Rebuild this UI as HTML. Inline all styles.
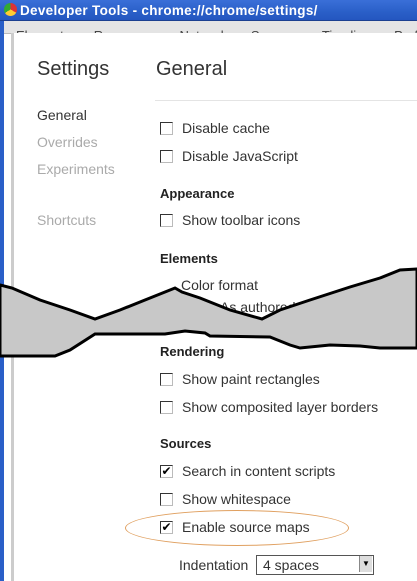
<!DOCTYPE html><html><head><style>
body{margin:0;width:417px;height:581px;overflow:hidden;position:relative;background:#fff;font-family:"Liberation Sans",sans-serif;}
.a{position:absolute;white-space:nowrap}
.t{font-size:14px;color:#333}
.h{font-size:13px;font-weight:bold;color:#222}
.cb{position:absolute;width:11px;height:11px;border:1px solid #333;border-right-color:#bbb;border-bottom-color:#bbb;background:#fff;font-size:12px;line-height:11px;text-align:center;color:#000}
.n{font-size:14px;color:#aaa}
</style></head><body>
<div class="a" style="left:0;top:0;width:417px;height:20px;background:linear-gradient(#3a6fd8,#2a5fc8 60%,#2456c0);border-bottom:1px solid #1b3f8f"></div>
<div class="a" style="left:4px;top:3px;width:13px;height:13px;border-radius:50%;background:conic-gradient(#d33 0 33%,#fc3 0 66%,#3a3 0)"></div>
<div class="a" style="left:20px;top:3px;color:#fff;font-weight:bold;font-size:13.5px;letter-spacing:0.3px">Developer Tools - chrome://chrome/settings/</div>
<div class="a" style="left:0;top:21px;width:4px;height:560px;background:#2a5fc8"></div>
<div class="a" style="left:4px;top:21px;width:413px;height:12px;background:#e4e4e4;border-bottom:1px solid #bbb"></div>
<div class="a" style="left:16px;top:28px;width:401px;font-size:13px;color:#444;height:5px;overflow:hidden;word-spacing:20px">Elements Resources Network Sources Timeline Profiles Audits</div>
<div class="a" style="left:11px;top:33px;width:3px;height:548px;background:#ccc"></div>
<div class="a" style="left:14px;top:33px;width:403px;height:548px;background:#fff"></div>
<div class="a" style="left:37px;top:58px;font-size:20px;color:#333">Settings</div>
<div class="a" style="left:156px;top:58px;font-size:20px;color:#333">General</div>
<div class="a" style="left:155px;top:100px;width:262px;height:1px;background:#e4e4e4"></div>
<div class="a t" style="left:37px;top:107px">General</div>
<div class="a n" style="left:37px;top:134px">Overrides</div>
<div class="a n" style="left:37px;top:161px">Experiments</div>
<div class="a n" style="left:37px;top:212px">Shortcuts</div>
<div class="cb" style="left:160px;top:122px"></div><div class="a t" style="left:182px;top:120px">Disable cache</div>
<div class="cb" style="left:160px;top:150px"></div><div class="a t" style="left:182px;top:148px">Disable JavaScript</div>
<div class="a h" style="left:160px;top:186px">Appearance</div>
<div class="cb" style="left:160px;top:214px"></div><div class="a t" style="left:182px;top:212px">Show toolbar icons</div>
<div class="a h" style="left:160px;top:251px">Elements</div>
<div class="a t" style="left:181px;top:277px">Color format</div>
<div class="a t" style="left:220px;top:299px">As authored</div>
<svg class="a" style="left:0;top:0" width="417" height="581"><path d="M0,285 L12,288 L40,300 L70,310 L95,319 L120,310 L145,300 L175,288 L182,292 L200,298 L230,310 L262,319 L280,310 L310,300 L350,287 L380,278 L400,270 L417,269 L417,348 L380,348 L360,346 L330,345 L300,348 L290,345 L275,339 L270,337 L210,336 L205,333 L185,331 L165,334 L95,334 L70,350 L55,356 L0,356 Z" fill="#c8c8c8" stroke="#000" stroke-width="3"/></svg>
<div class="a h" style="left:160px;top:344px">Rendering</div>
<div class="cb" style="left:160px;top:373px"></div><div class="a t" style="left:182px;top:371px">Show paint rectangles</div>
<div class="cb" style="left:160px;top:401px"></div><div class="a t" style="left:182px;top:399px">Show composited layer borders</div>
<div class="a h" style="left:160px;top:436px">Sources</div>
<div class="cb" style="left:160px;top:465px">✔</div><div class="a t" style="left:182px;top:463px">Search in content scripts</div>
<div class="cb" style="left:160px;top:493px"></div><div class="a t" style="left:182px;top:491px">Show whitespace</div>
<div class="a" style="left:125px;top:510px;width:222px;height:34px;border:1px solid #e0a060;border-radius:50%"></div>
<div class="cb" style="left:160px;top:521px">✔</div><div class="a t" style="left:182px;top:519px">Enable source maps</div>
<div class="a t" style="left:179px;top:557px">Indentation</div>
<div class="a" style="left:256px;top:555px;width:116px;height:18px;border:1px solid #555;background:#fff"></div>
<div class="a t" style="left:263px;top:557px">4 spaces</div>
<div class="a" style="left:359px;top:556px;width:12px;height:16px;background:#ddd;border-left:1px solid #888;font-size:8px;text-align:center;line-height:16px">▼</div>
</body></html>
